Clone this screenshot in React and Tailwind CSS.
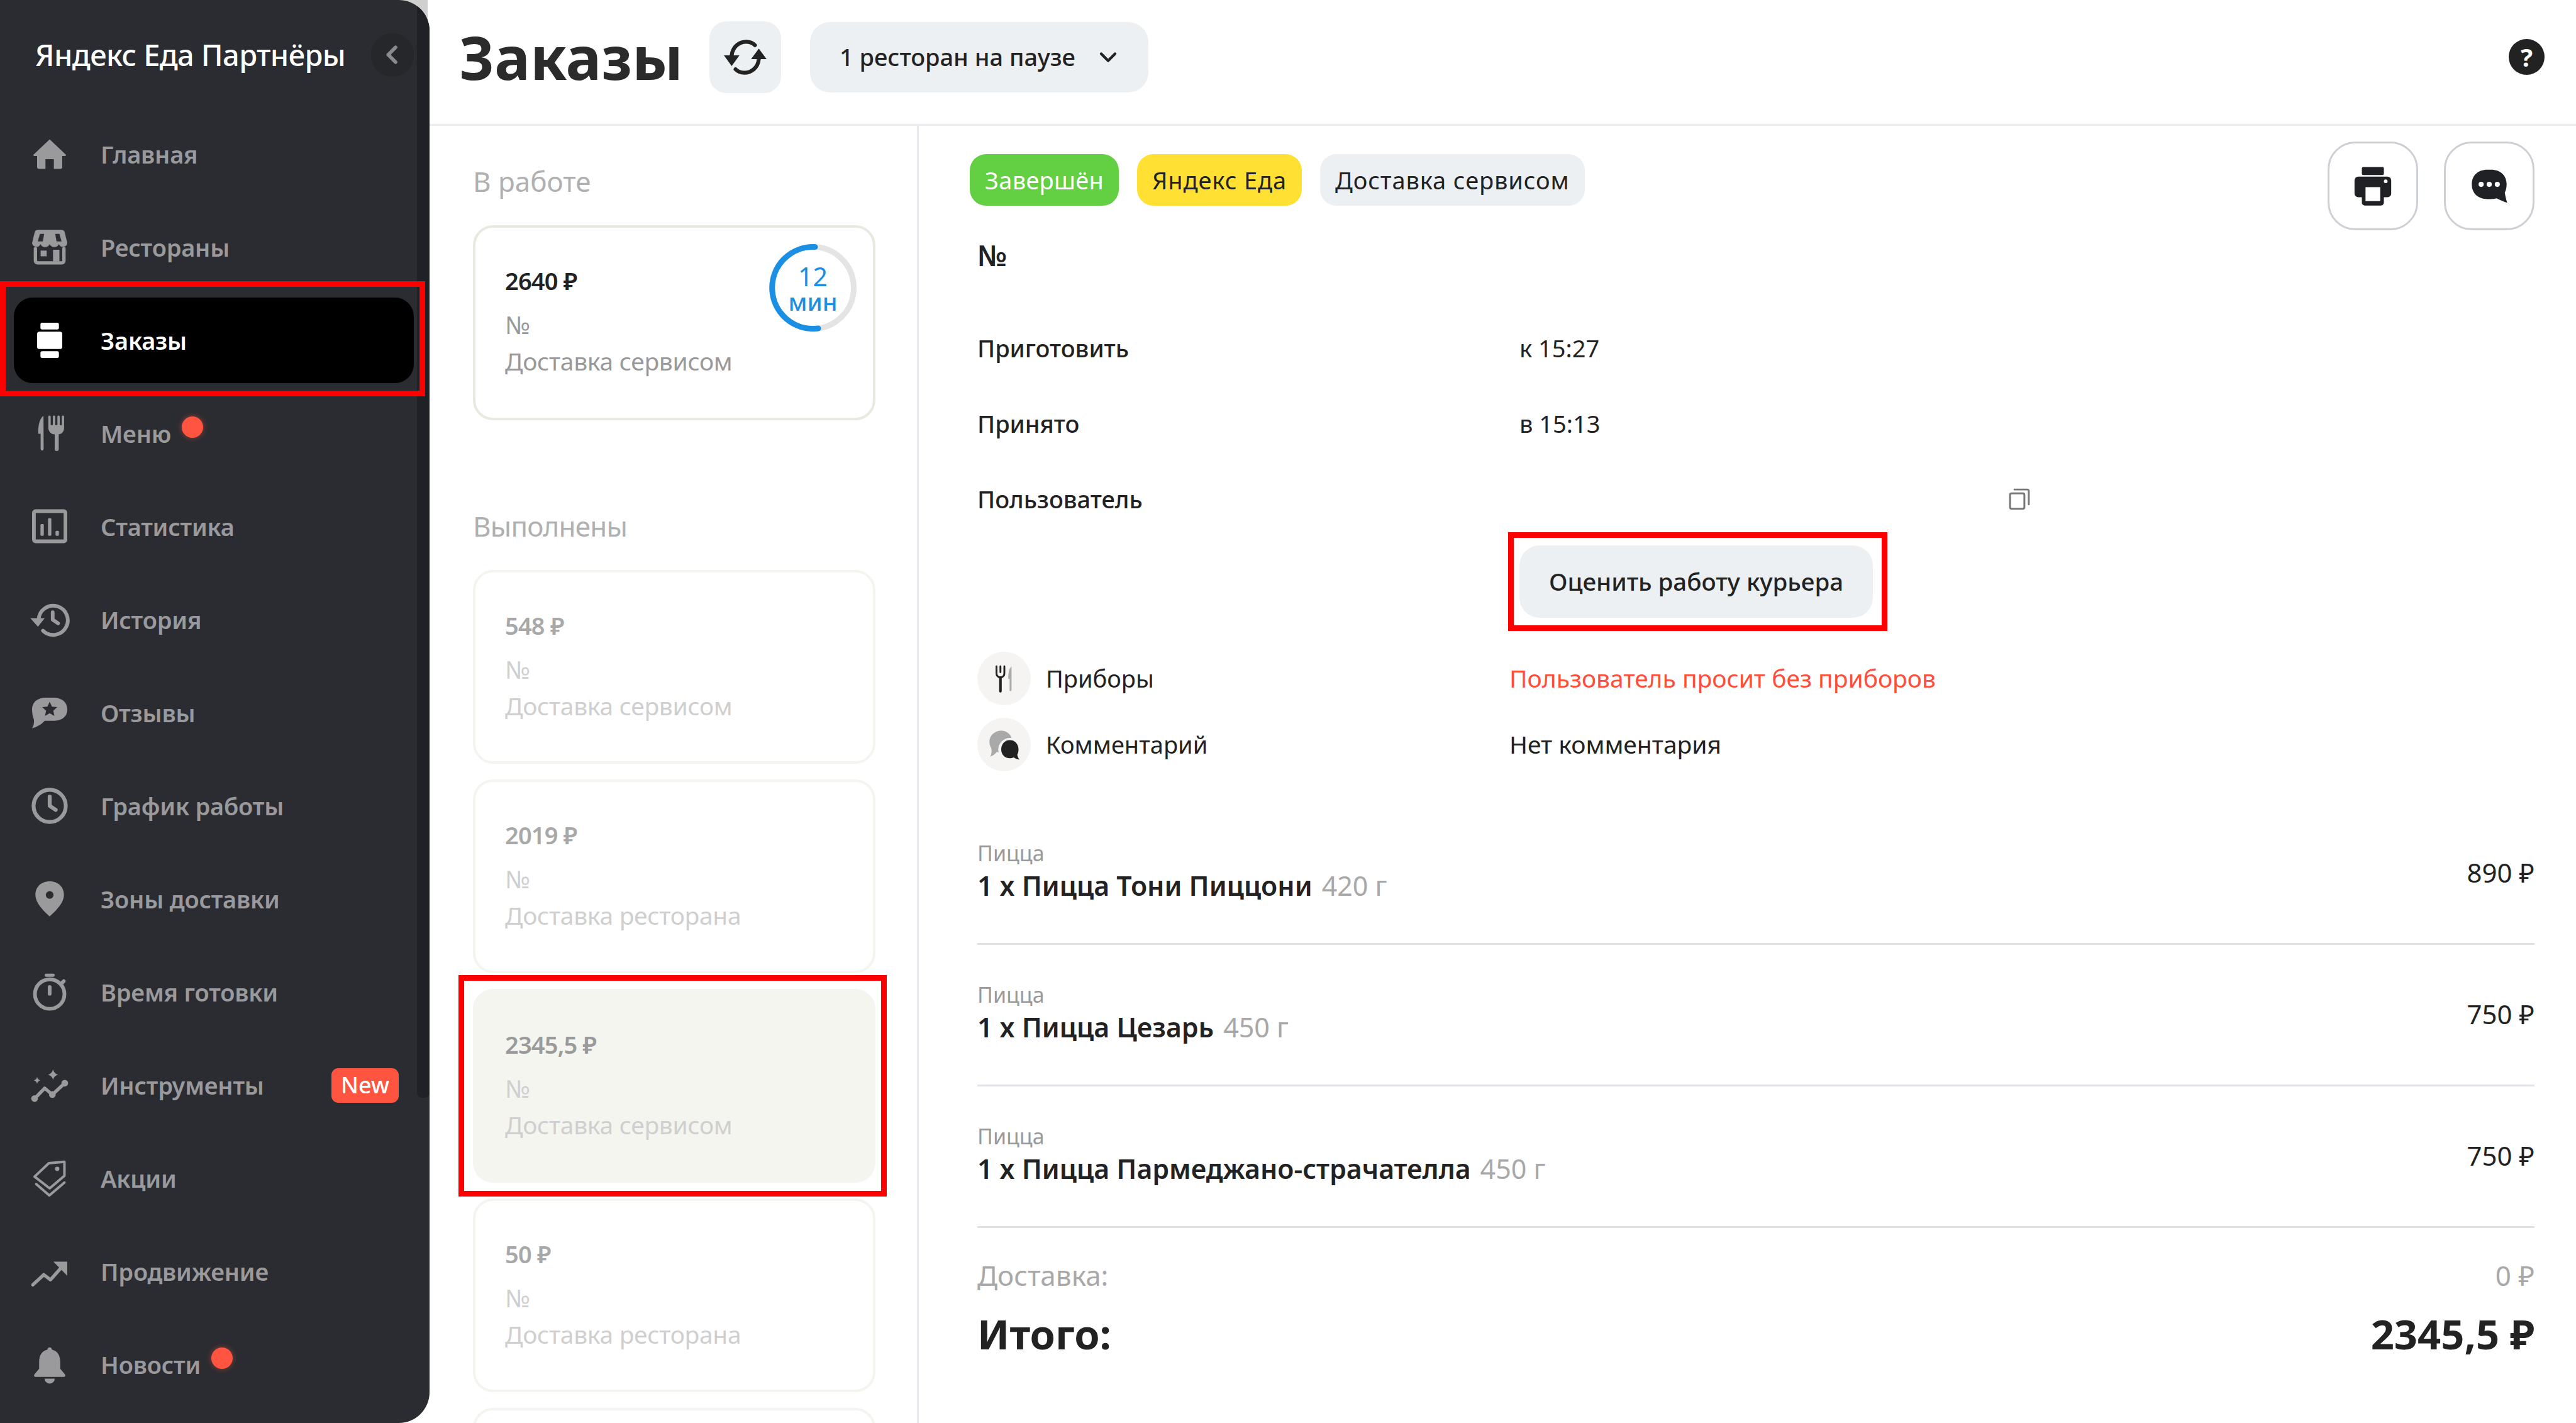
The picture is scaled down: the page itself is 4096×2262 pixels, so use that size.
import React from "react";

const Svg = ({ size = 64, children, className = "" }) => (
  <svg width={size} height={size} viewBox="0 0 24 24" fill="currentColor" className={className}>
    {children}
  </svg>
);

const line = { fill: "none", stroke: "currentColor", strokeLinecap: "round", strokeLinejoin: "round" };

const icons = {
  home: <path d="M12 3.2 21.7 12.4Q22 13.1 21 13.1H19.5V19.6a1.2 1.2 0 0 1-1.2 1.2H14.5V15h-5v5.8H5.7a1.2 1.2 0 0 1-1.2-1.2V13.1H3Q2 13.1 2.3 12.4Z" />,
  store: (
    <>
      <path fillRule="evenodd" d="M5 1.7H19a2 2 0 0 1 2 1.6L22.5 9.5a2.6 2.6 0 0 1-5 .6 3 3 0 0 1-5.5 0 3 3 0 0 1-5.5 0 2.6 2.6 0 0 1-5-.6L3 3.3a2 2 0 0 1 2-1.6ZM6.2 4 4.9 8.5h3L8.7 4ZM15.3 4 16.1 8.5h3L17.8 4Z" />
      <path {...line} strokeWidth="2" d="M3.5 12.8V20a1.3 1.3 0 0 0 1.3 1.3H19.2A1.3 1.3 0 0 0 20.5 20V12.8" />
      <rect x="6.6" y="14" width="3.6" height="3.4" />
      <path d="M14 13.5h3.8v7h-3.8Z" />
    </>
  ),
  orders: (
    <>
      <rect x="6.5" y="1.5" width="11" height="4" rx="1" />
      <rect x="4.5" y="6.8" width="15" height="10.4" rx="1.4" />
      <rect x="6.5" y="18.5" width="11" height="4" rx="1" />
    </>
  ),
  menu: (
    <>
      <path d="M8.3 1.5C6 3 5.1 7 5.1 12.2H6.6V21.3a.9.9 0 0 0 1.8 0Z" />
      <path d="M11.2 2a.7.7 0 0 1 1.4 0V7h1.3V2a.7.7 0 0 1 1.4 0V7h1.3V2a.7.7 0 0 1 1.4 0V7h1.2V2a.7.7 0 0 1 1.4 0V9.2a4 4 0 0 1-3.2 3.4V21.3a1.2 1.2 0 0 1-2.4 0V12.6a4 4 0 0 1-3.8-3.4Z" />
    </>
  ),
  stats: (
    <>
      <rect {...line} strokeWidth="2.2" x="2.6" y="2.8" width="18.8" height="18" rx="1" />
      <rect x="6.5" y="10.5" width="2" height="7" rx=".6" />
      <rect x="11" y="7" width="2" height="10.5" rx=".6" />
      <rect x="15.5" y="14.5" width="2" height="3" rx=".6" />
    </>
  ),
  history: (
    <>
      <path {...line} strokeWidth="2.2" d="M5.4 12A8.7 8.7 0 1 1 8 18.6" />
      <path d="M.5 11.2H9L5 16.2Z" />
      <path {...line} strokeWidth="2.2" d="M13.8 7.6V12L17 14.2" />
    </>
  ),
  reviews: <path fillRule="evenodd" d="M10 3H14C19 3 22.5 5.5 22.5 10C22.5 14.5 19 16.8 14 16.8H9C7.5 18.6 4.5 20.6 1.5 21.2C2.5 19.5 2.8 18 2.6 16C1.9 14.5 1.5 12 1.5 10C1.5 5.5 5 3 10 3ZM12 5.4 13.35 8.3 16.5 8.65 14.15 10.75 14.8 13.85 12 12.25 9.2 13.85 9.85 10.75 7.5 8.65 10.65 8.3Z" />,
  clock: (
    <>
      <circle {...line} strokeWidth="2.3" cx="12" cy="12" r="9.6" />
      <path {...line} strokeWidth="2.3" d="M12 6.5V12L15.6 14.4" />
    </>
  ),
  pin: <path fillRule="evenodd" d="M12 1.5C17.5 1.5 20.5 5.2 20.5 9.5C20.5 15 14.5 20 12 22.5C9.5 20 3.5 15 3.5 9.5C3.5 5.2 6.5 1.5 12 1.5ZM12 7.3a2.3 2.3 0 1 0 0 4.6a2.3 2.3 0 0 0 0-4.6Z" />,
  timer: (
    <>
      <circle {...line} strokeWidth="2.2" cx="12" cy="13.2" r="8.8" />
      <rect x="9" y="1" width="6" height="1.9" rx=".9" />
      <path {...line} strokeWidth="2.2" d="M12 9V13M19.3 6.6 20.4 5.5" />
    </>
  ),
  tools: (
    <>
      <path {...line} strokeWidth="2" d="M3 20 9 13.8 13.6 17.6 21 10.8" />
      <circle cx="3" cy="20" r="2" />
      <circle cx="13.6" cy="17.6" r="2" />
      <circle cx="21" cy="10.8" r="2" />
      <path d="M14 2.5q.6 2.6 3 3.2q-2.4.6-3 3.2q-.6-2.6-3-3.2q2.4-.6 3-3.2Z" />
      <path d="M4.5 7q.4 1.7 2 2.1q-1.6.4-2 2.1q-.4-1.7-2-2.1q1.6-.4 2-2.1Z" />
    </>
  ),
  tag: (
    <>
      <path {...line} strokeWidth="1.5" d="M3 11 11.5 3 20.8 2.2V10.5L12 18Z" />
      <circle cx="16.5" cy="6.4" r="1.3" />
      <path {...line} strokeWidth="1.5" d="M4 15.5 11.8 22.2 20.8 14.5" />
    </>
  ),
  promo: (
    <>
      <path {...line} strokeWidth="2" d="M2 20 8.5 14 12.5 17 20 8.5" />
      <path d="M14.2 6.2H22.5V14.6Z" />
    </>
  ),
  bell: <path d="M12 1.8C12.8 1.8 13.3 2.4 13.3 3.1C17 4 18.3 7 18.3 10.5V14.5L21.1 17.9C21.6 18.6 21.2 19.4 20.3 19.4H3.7C2.8 19.4 2.4 18.6 2.9 17.9L5.7 14.5V10.5C5.7 7 7 4 10.7 3.1C10.7 2.4 11.2 1.8 12 1.8ZM9 20.4H15A3 3 0 0 1 9 20.4Z" />,
};

const navItems = [
  { label: "Главная", icon: "home" },
  { label: "Рестораны", icon: "store" },
  { label: "Заказы", icon: "orders", active: true },
  { label: "Меню", icon: "menu", dot: true },
  { label: "Статистика", icon: "stats" },
  { label: "История", icon: "history" },
  { label: "Отзывы", icon: "reviews" },
  { label: "График работы", icon: "clock" },
  { label: "Зоны доставки", icon: "pin" },
  { label: "Время готовки", icon: "timer" },
  { label: "Инструменты", icon: "tools", isNew: true },
  { label: "Акции", icon: "tag" },
  { label: "Продвижение", icon: "promo" },
  { label: "Новости", icon: "bell", dot: true },
];

const doneOrders = [
  { price: "548 ₽", type: "Доставка сервисом" },
  { price: "2019 ₽", type: "Доставка ресторана" },
  { price: "2345,5 ₽", type: "Доставка сервисом", selected: true },
  { price: "50 ₽", type: "Доставка ресторана" },
];

const dishes = [
  { name: "1 x Пицца Тони Пиццони", weight: "420 г", price: "890 ₽" },
  { name: "1 x Пицца Цезарь", weight: "450 г", price: "750 ₽" },
  { name: "1 x Пицца Пармеджано-страчателла", weight: "450 г", price: "750 ₽" },
];

const NavRow = ({ item }) => (
  <div className={`relative ml-[22px] flex h-[136px] w-[636px] items-center rounded-[30px] pl-[17px] ${item.active ? "bg-black text-white" : "text-[#9a9a9d]"}`}>
    <div className="flex w-[80px] shrink-0 justify-center">
      <Svg size={64}>{icons[item.icon]}</Svg>
    </div>
    <span className="ml-[41px] text-[38px] font-semibold tracking-[-0.2px]">{item.label}</span>
    {item.dot && (
      <span className="ml-[17px] mb-[20px] h-[34px] w-[34px] rounded-full bg-[#ff5440] shadow-[0_0_8px_rgba(255,84,64,0.5)]" />
    )}
    {item.isNew && (
      <span className="ml-auto mr-[24px] flex h-[55px] w-[107px] items-center justify-center rounded-[11px] bg-[#ff5440] text-[36px] font-medium text-white">
        New
      </span>
    )}
    {item.active && <span className="absolute -left-[22px] -top-[26px] h-[183px] w-[676px] border-[9px] border-[#ff0000]" />}
  </div>
);

const Sidebar = () => (
  <aside className="relative z-10 h-[2262px] w-[683px] shrink-0 overflow-hidden rounded-r-[49px] bg-[#2b2c31]">
    <div className="absolute right-0 top-0 h-[1745px] w-[20px] rounded-b-[8px] bg-[#202124]" />
    <div className="relative flex h-[174px] items-center pl-[56px] pr-[25px]">
      <span className="text-[47px] font-medium tracking-[-0.6px] text-white">Яндекс Еда Партнёры</span>
      <button className="ml-auto flex h-[69px] w-[68px] items-center justify-center rounded-full bg-[#26272a] text-[#8b8b8e]">
        <svg width="40" height="40" viewBox="0 0 24 24" {...line} strokeWidth="3.4">
          <path d="M15 5 8 12l7 7" />
        </svg>
      </button>
    </div>
    <nav className="relative mt-[3px] flex flex-col gap-[12px]">
      {navItems.map((item) => (
        <NavRow key={item.label} item={item} />
      ))}
    </nav>
  </aside>
);

const Timer = () => (
  <div className="relative h-[139px] w-[139px] shrink-0">
    <svg width="139" height="139" viewBox="0 0 139 139" className="absolute inset-0">
      <circle cx="69.5" cy="69.5" r="65" fill="none" stroke="#e4e4e4" strokeWidth="9" />
      <path d="M73 4.6A65 65 0 1 0 78 134" fill="none" stroke="#1b8fe3" strokeWidth="9" strokeLinecap="round" />
    </svg>
    <div className="relative flex h-full flex-col items-center justify-center text-[#1b8fe3]">
      <span className="text-[41px] leading-[44px]">12</span>
      <span className="-mt-[2px] text-[38px] font-medium leading-[40px]">мин</span>
    </div>
  </div>
);

const OrderCard = ({ price, type, selected, active }) => {
  const frame = selected
    ? "bg-[#f5f5f0] border-[#f5f5f0]"
    : active
      ? "bg-white border-[#e9e9e0]"
      : "bg-white border-[#f4f4f0]";
  const priceColor = active ? "text-[#222222]" : selected ? "text-[#9a9a9a]" : "text-[#a8a8a8]";
  const subColor = active ? "text-[#999999]" : "text-[#cfcfcf]";
  return (
    <div className={`relative flex ${active ? "h-[310px]" : "h-[308px]"} w-[640px] shrink-0 items-start justify-between rounded-[32px] border-[4px] pl-[47px] pr-[26px] pt-[26px] ${frame}`}>
      <div className="pt-[33px]">
        <div className={`text-[38px] font-semibold leading-[50px] tracking-[-0.8px] ${priceColor}`}>{price}</div>
        <div className={`mt-[15px] text-[39px] leading-[60px] ${subColor}`}>№</div>
        <div className={`-mt-[2px] text-[39px] leading-[60px] tracking-[-0.3px] ${subColor}`}>{type}</div>
      </div>
      {active && <Timer />}
      {selected && <span className="absolute -left-[27px] -right-[22px] -top-[26px] -bottom-[26px] border-[9px] border-[#ff0000]" />}
    </div>
  );
};

const OrderList = () => (
  <section className="flex w-[778px] shrink-0 flex-col overflow-hidden border-r-[3px] border-[#e8eaef] pl-[69px] pt-[58px]">
    <h3 className="text-[44px] leading-[60px] text-[#b0b0b0]">В работе</h3>
    <div className="mt-[40px]">
      <OrderCard active price="2640 ₽" type="Доставка сервисом" />
    </div>
    <h3 className="mt-[138px] text-[44px] leading-[60px] tracking-[-0.8px] text-[#b0b0b0]">Выполнены</h3>
    <div className="mt-[40px] flex flex-col gap-[25px]">
      {doneOrders.map((o) => (
        <OrderCard key={o.price} {...o} />
      ))}
      <div className="h-[308px] w-[640px] shrink-0 rounded-[32px] border-[4px] border-[#f4f4f0]" />
    </div>
  </section>
);

const Tag = ({ className, children }) => (
  <span className={`flex h-[82px] items-center rounded-[26px] px-[24px] text-[38px] ${className}`}>{children}</span>
);

const IconButton = ({ children }) => (
  <button className="flex h-[141px] w-[144px] items-center justify-center rounded-[44px] border-[3px] border-[#ccd0d5] text-[#202124]">
    {children}
  </button>
);

const InfoRow = ({ label, children }) => (
  <div className="flex h-[120px] items-center text-[#222222]">
    <span className="w-[862px] shrink-0 text-[38px] font-medium">{label}</span>
    {children}
  </div>
);

const NoteRow = ({ icon, label, children }) => (
  <div className="flex h-[85px] items-center text-[38px] text-[#222222]">
    <span className="flex h-[85px] w-[85px] shrink-0 items-center justify-center rounded-full bg-[#f5f4f2]">{icon}</span>
    <span className="ml-[24px] w-[737px] shrink-0">{label}</span>
    <span className="text-[39px]">{children}</span>
  </div>
);

const OrderDetails = () => (
  <section className="flex-1 overflow-hidden pl-[93px] pr-[66px]">
    <div className="-ml-[12px] flex justify-between pt-[25px]">
      <div className="mt-[20px] flex gap-[29px]">
        <Tag className="bg-[#63cf42] tracking-[0.3px] text-white">Завершён</Tag>
        <Tag className="bg-[#ffe033] tracking-[0.9px] text-[#222222]">Яндекс Еда</Tag>
        <Tag className="bg-[#edf0f2] tracking-[0.9px] text-[#222222]">Доставка сервисом</Tag>
      </div>
      <div className="flex gap-[41px]">
        <IconButton>
          <Svg size={70}>
            <rect x="6" y="1.5" width="12" height="4.4" rx=".8" />
            <rect x="2" y="6.8" width="20" height="11.2" rx="2" />
            <rect x="6" y="12.5" width="12" height="10" rx="1.6" />
            <rect x="8" y="12.5" width="8" height="7.6" fill="white" />
            <circle cx="19" cy="9.3" r="1" fill="white" />
          </Svg>
        </IconButton>
        <IconButton>
          <Svg size={70}>
            <path d="M11 3H13C18 3 21.5 6 21.5 11C21.5 13 21 14.5 20.5 15.5C20.8 17.5 21.3 19.5 21.8 21C20 20.5 18 19.5 16 18.6C15 18.9 14 19 13 19H11C6 19 2.5 16 2.5 11C2.5 6 6 3 11 3Z" />
            <circle cx="7.6" cy="11" r="1.4" fill="white" />
            <circle cx="12" cy="11" r="1.4" fill="white" />
            <circle cx="16.4" cy="11" r="1.4" fill="white" />
          </Svg>
        </IconButton>
      </div>
    </div>

    <div className="mt-[9px] text-[46px] font-semibold leading-[60px] text-[#222222]">№</div>

    <div className="mt-[58px]">
      <InfoRow label="Приготовить"><span className="text-[38px]">к 15:27</span></InfoRow>
      <InfoRow label="Принято"><span className="text-[38px]">в 15:13</span></InfoRow>
      <InfoRow label="Пользователь">
        <svg width="42" height="42" viewBox="0 0 24 24" {...line} strokeWidth="1.7" className="ml-[774px] text-[#777777]">
          <rect x="3.5" y="7" width="13" height="14" rx="1.5" />
          <path d="M7.5 3.5H19A1.5 1.5 0 0 1 20.5 5V17" />
        </svg>
      </InfoRow>
    </div>

    <div className="mt-[14px] pl-[862px]">
      <button className="relative flex h-[115px] w-[562px] items-center justify-center rounded-[32px] bg-[#edf0f2] text-[38.5px] font-medium text-[#222222]">
        Оценить работу курьера
        <span className="absolute -left-[18px] -right-[23px] -top-[21px] -bottom-[21px] border-[9px] border-[#ff0000]" />
      </button>
    </div>

    <div className="mt-[54px] flex flex-col gap-[20px]">
      <NoteRow
        label="Приборы"
        icon={
          <Svg size={50}>
            <path {...line} strokeWidth="1.4" className="text-[#222222]" d="M6 2.5V8a3 3 0 0 0 6 0V2.5M9 2.5V7" />
            <path {...line} strokeWidth="2" d="M9 11V21.5" />
            <path fill="#a9abad" d="M17.5 2.5C15.5 4 15 8 15 12H16V21a.9.9 0 0 0 1.5 0Z" />
          </Svg>
        }
      >
        <span className="text-[#ff4d3a]">Пользователь просит без приборов</span>
      </NoteRow>
      <NoteRow
        label="Комментарий"
        icon={
          <Svg size={60}>
            <path fill="#a9a9a9" d="M10 3C14 3 17 6 17 10C17 14 14 17 10 17C9 17 8 16.8 7.3 16.4C6 18 4.5 19 3 19.5C3.8 18 4 16.5 3.8 14.5C3 13 2.5 11.5 2.5 10C2.5 6 6 3 10 3Z" />
            <circle cx="15.5" cy="15" r="7.4" fill="#f5f4f2" />
            <path fill="#222222" d="M15.5 9C18.8 9 21 11.5 21 15C21 16.5 20.6 17.5 20.2 18.3C20.4 19.4 20.9 20.6 21.6 21.4C20.2 21.2 18.8 20.6 17.8 20C17.2 20.3 16.4 20.5 15.5 20.5C12.2 20.5 10 18 10 15C10 11.5 12.2 9 15.5 9Z" />
          </Svg>
        }
      >
        Нет комментария
      </NoteRow>
    </div>

    <div className="mt-[51px]">
      {dishes.map((d) => (
        <div key={d.name} className="flex h-[225px] items-center justify-between border-b-[3px] border-[#dfe1e5]">
          <div className="-mt-[10px]">
            <div className="text-[34px] leading-[50px] text-[#9a9a9a]">Пицца</div>
            <div className="text-[42.8px] leading-[54px] text-[#222222]">
              <span className="font-semibold">{d.name}</span>
              <span className="ml-[15px] text-[43px] text-[#a8a8a8]">{d.weight}</span>
            </div>
          </div>
          <span className="-mt-[4px] text-[42px] text-[#222222]">{d.price}</span>
        </div>
      ))}
    </div>

    <div className="mt-[45px] flex h-[60px] items-center justify-between text-[44px] text-[#a8a8a8]">
      <span>Доставка:</span>
      <span>0 ₽</span>
    </div>
    <div className="mt-[19px] flex h-[90px] items-center justify-between text-[65px] font-bold text-[#222222]">
      <span>Итого:</span>
      <span>2345,5 ₽</span>
    </div>
  </section>
);

export default function App() {
  return (
    <div className="relative flex h-[2262px] w-[4096px] overflow-hidden bg-white font-['Noto_Sans',sans-serif]">
      <div className="absolute left-[640px] top-0 h-[45px] w-[40px] bg-[#cfcfcf]" />
      <Sidebar />
      <main className="flex h-full min-w-0 flex-1 flex-col">
        <header className="flex h-[200px] shrink-0 items-center border-b-[3px] border-[#ebedf0] pb-[16px] pl-[47px] pr-[50px]">
          <h1 className="w-[347px] shrink-0 whitespace-nowrap text-[95px] font-bold leading-none text-[#2b2b2b]">Заказы</h1>
          <button className="ml-[51px] flex h-[114px] w-[114px] items-center justify-center rounded-[27px] bg-[#edf0f2] text-[#222222]">
            <Svg size={74}>
              <path {...line} strokeWidth="2" d="M5 11C5.5 6.5 9 4 12.5 4C14.5 4 16 4.8 17 5.8" />
              <path {...line} strokeWidth="2" d="M19 13C18.5 17.5 15 20 11.5 20C9.5 20 8 19.2 7 18.2" />
              <path d="M1 11H9L5 16.5Z" />
              <path d="M23 13H15L19 7.5Z" />
            </Svg>
          </button>
          <button className="ml-[46px] flex h-[112px] w-[538px] items-center rounded-[32px] bg-[#edf0f2] pl-[47px] text-[38px] font-medium text-[#222222]">
            1 ресторан на паузе
            <svg width="44" height="44" viewBox="0 0 24 24" {...line} strokeWidth="2.4" className="ml-[30px]">
              <path d="m6 9 6 6 6-6" />
            </svg>
          </button>
          <span className="ml-auto flex h-[57px] w-[57px] items-center justify-center rounded-full bg-[#222222] text-[40px] font-bold text-white">?</span>
        </header>
        <div className="flex min-h-0 flex-1">
          <OrderList />
          <OrderDetails />
        </div>
      </main>
    </div>
  );
}
